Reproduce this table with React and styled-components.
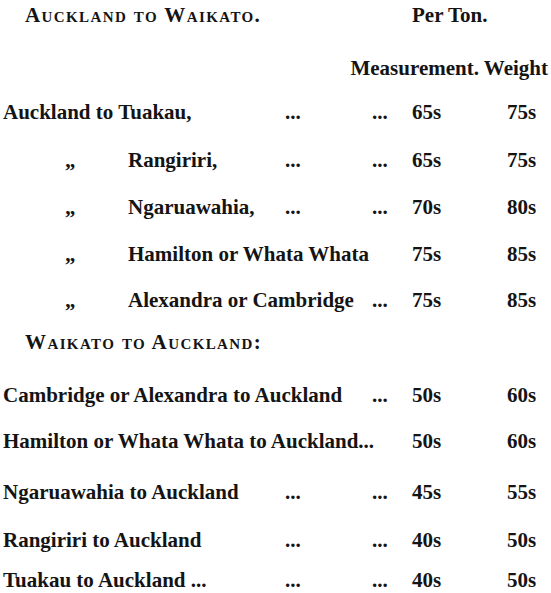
import styled, { createGlobalStyle } from 'styled-components'

const GlobalStyle = createGlobalStyle`
   body {
      margin: 0;
      background: #ffffff;
   }
`

const upward = [
   { name: 'Auckland to Tuakau,', dots: ['...', '...'], m: '65s', w: '75s', top: 20 },
   { ditto: true, name: 'Rangiriri,', dots: ['...', '...'], m: '65s', w: '75s', top: 24 },
   { ditto: true, name: 'Ngaruawahia,', dots: ['...', '...'], m: '70s', w: '80s', top: 23 },
   { ditto: true, name: 'Hamilton or Whata Whata', span: 3, dots: [], m: '75s', w: '85s', top: 23 },
   { ditto: true, name: 'Alexandra or Cambridge', span: 2, dots: ['...'], m: '75s', w: '85s', top: 22 },
]

const downward = [
   { name: 'Cambridge or Alexandra to Auckland', span: 2, dots: ['...'], m: '50s', w: '60s', top: 29 },
   { name: 'Hamilton or Whata Whata to Auckland...', span: 3, dots: [], m: '50s', w: '60s', top: 22 },
   { name: 'Ngaruawahia to Auckland', dots: ['...', '...'], m: '45s', w: '55s', top: 27 },
   { name: 'Rangiriri to Auckland', dots: ['...', '...'], m: '40s', w: '50s', top: 24 },
   { name: 'Tuakau to Auckland ...', dots: ['...', '...'], m: '40s', w: '50s', top: 16 },
]

function RateRow({ row }) {
   return (
      <Row $top={row.top}>
         <Label $span={row.span || 1}>
            {row.ditto ? <Ditto>„</Ditto> : null}
            {row.name}
         </Label>
         {row.dots.map((d, i) => (
            <Dots key={i}>{d}</Dots>
         ))}
         <Price>{row.m}</Price>
         <Price>{row.w}</Price>
      </Row>
   )
}

function App() {
   return (
      <>
         <GlobalStyle />
         <Page>
            <Row $top={3}>
               <SectionHead $span={3}>Auckland to Waikato.</SectionHead>
               <PerTon>Per Ton.</PerTon>
            </Row>
            <ColumnHeads>Measurement. Weight</ColumnHeads>
            {upward.map((row) => (
               <RateRow key={row.name} row={row} />
            ))}
            <Row $top={18}>
               <SectionHead $span={4}>Waikato to Auckland:</SectionHead>
            </Row>
            {downward.map((row) => (
               <RateRow key={row.name} row={row} />
            ))}
         </Page>
      </>
   )
}

export default App

const Page = styled.div`
   width: 551px;
   height: 593px;
   overflow: hidden;
   box-sizing: border-box;
   padding-left: 3px;
   display: flex;
   flex-direction: column;
   font-family: "Liberation Serif", "Times New Roman", serif;
   font-weight: bold;
   font-size: 21px;
   color: #141414;
`

const Row = styled.div`
   display: grid;
   grid-template-columns: 282px 87px 40px 95px 1fr;
   height: 24px;
   line-height: 24px;
   margin-top: ${(p) => p.$top}px;
   white-space: nowrap;
`

const Label = styled.div`
   grid-column: span ${(p) => p.$span};
   display: flex;
`

const Ditto = styled.span`
   width: 63px;
   padding-left: 62px;
`

const Dots = styled.div`
   letter-spacing: 0;
`

const Price = styled.div``

const SectionHead = styled.div`
   grid-column: span ${(p) => p.$span};
   padding-left: 22px;
   font-variant: small-caps;
   letter-spacing: 1.4px;
`

const PerTon = styled.div`
   grid-column: span 2;
`

const ColumnHeads = styled.div`
   display: flex;
   justify-content: flex-end;
   padding-right: 3px;
   height: 24px;
   line-height: 24px;
   margin-top: 29px;
   white-space: nowrap;
`
